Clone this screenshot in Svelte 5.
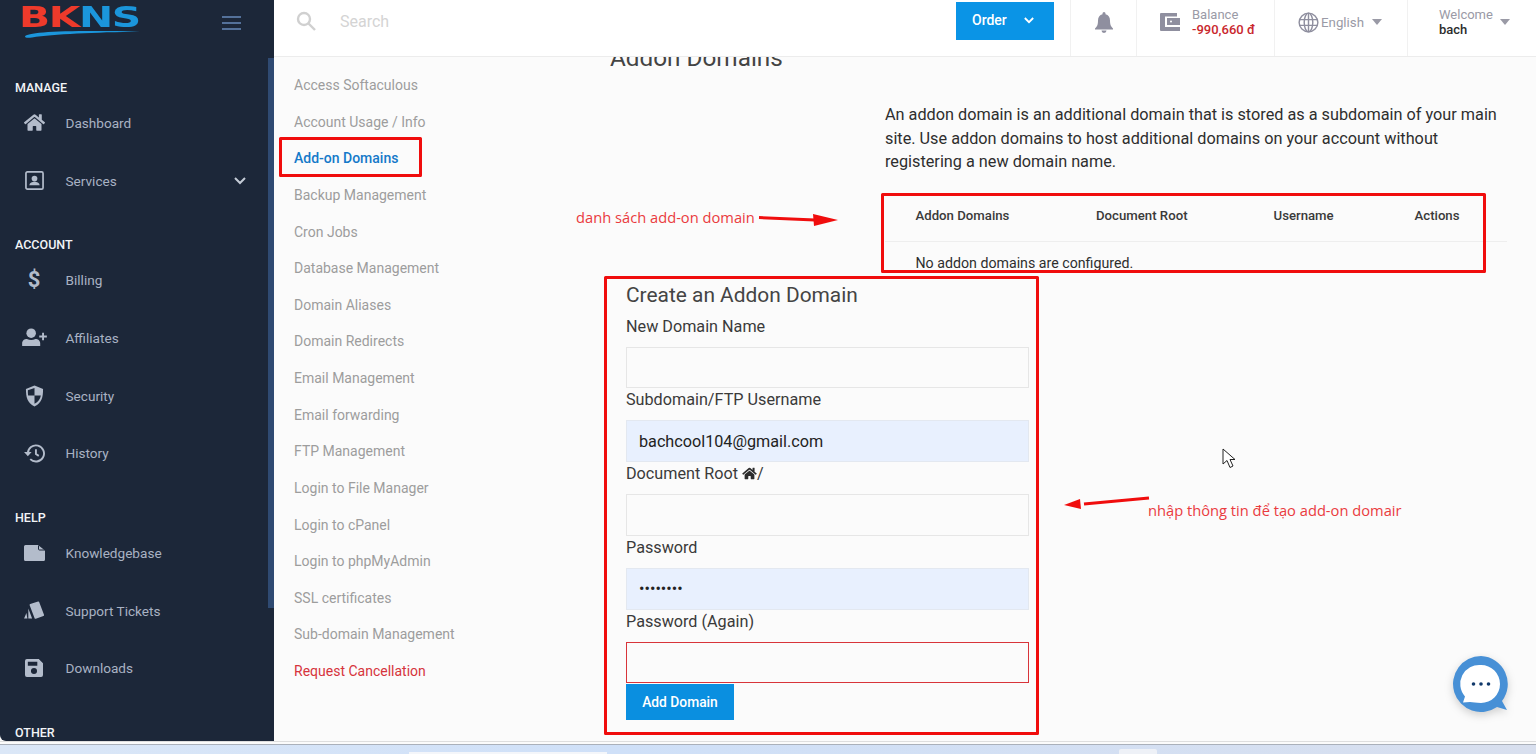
<script>
  const groups = [
    { title: 'MANAGE', items: [
      { label: 'Dashboard', icon: 'home' },
      { label: 'Services', icon: 'contact', more: true }
    ] },
    { title: 'ACCOUNT', items: [
      { label: 'Billing', icon: 'dollar' },
      { label: 'Affiliates', icon: 'userplus' },
      { label: 'Security', icon: 'shield' },
      { label: 'History', icon: 'history' }
    ] },
    { title: 'HELP', items: [
      { label: 'Knowledgebase', icon: 'folder' },
      { label: 'Support Tickets', icon: 'cards' },
      { label: 'Downloads', icon: 'save' }
    ] },
    { title: 'OTHER', items: [] }
  ];

  const sublinks = [
    'Access Softaculous', 'Account Usage / Info', 'Add-on Domains', 'Backup Management',
    'Cron Jobs', 'Database Management', 'Domain Aliases', 'Domain Redirects',
    'Email Management', 'Email forwarding', 'FTP Management', 'Login to File Manager',
    'Login to cPanel', 'Login to phpMyAdmin', 'SSL certificates', 'Sub-domain Management',
    'Request Cancellation'
  ];

  const homePath = 'M280.37 148.26L96 300.11V464a16 16 0 0 0 16 16l112.06-.29a16 16 0 0 0 15.92-16V368a16 16 0 0 1 16-16h64a16 16 0 0 1 16 16v95.64a16 16 0 0 0 16 16.05L464 480a16 16 0 0 0 16-16V300L295.67 148.26a12.19 12.19 0 0 0-15.3 0zM571.6 251.47L488 182.56V44.05a12 12 0 0 0-12-12h-56a12 12 0 0 0-12 12v72.61L318.47 43a48 48 0 0 0-61 0L4.34 251.47a12 12 0 0 0-1.6 16.9l25.5 31A12 12 0 0 0 45.15 301l235.22-193.74a12.19 12.19 0 0 1 15.3 0L530.9 301a12 12 0 0 0 16.9-1.6l25.5-31a12 12 0 0 0-1.7-16.93z';
</script>

<div class="screen">
  <div class="app">
    <aside class="sidebar">
      <div class="brand">
        <div class="logo">
          <span class="logo-text"><span class="red">BK</span><span class="blue">NS</span></span>
          <svg class="swoosh" viewBox="0 0 116 8" width="116" height="8">
            <path d="M1 6.500C3 2 40 0 116 1.500 70 2.500 30 4 8 7.500 4 8 1 8 1 6.500z" fill="#1b96dc" />
          </svg>
        </div>
        <div class="burger"><i></i><i></i><i></i></div>
      </div>

      {#each groups as group}
        <div class="group-title">{group.title}</div>
        {#each group.items as item}
          <div class="nav-item">
            <span class="nav-icon">
              {#if item.icon === 'home'}
                <svg viewBox="0 0 576 512" width="21" height="19"><path d={homePath} /></svg>
              {:else if item.icon === 'contact'}
                <svg viewBox="0 0 20 20" width="19" height="19">
                  <rect x="1" y="1" width="18" height="18" rx="1.500" fill="none" stroke="currentColor" stroke-width="1.800" />
                  <circle cx="10" cy="8" r="3" />
                  <path d="M4.500 15c.5-3 3-3.800 5.500-3.800s5 .8 5.500 3.800z" />
                </svg>
              {:else if item.icon === 'dollar'}
                <span class="dollar">$</span>
              {:else if item.icon === 'userplus'}
                <svg viewBox="0 0 26 20" width="25" height="19">
                  <circle cx="9.500" cy="5.500" r="5" />
                  <path d="M0 19v-3c0-3 2.500-4.500 5-4.500 1.500.7 3 1 4.500 1s3-.3 4.500-1c2.500 0 5 1.500 5 4.500v3z" />
                  <path d="M21 5h2v3h3v2h-3v3h-2v-3h-3V8h3z" />
                </svg>
              {:else if item.icon === 'shield'}
                <svg viewBox="0 0 20 23" width="19" height="22">
                  <path d="M10 .5 1 4c0 8 1 14.500 9 18.500 8-4 9-10.500 9-18.500z" />
                  <path d="M10 3 3 5.500c0 2 0 4 .3 5.500H10zM10 11h6.700C16 15 14 17.500 10 19.700z" fill="#1c2739" />
                </svg>
              {:else if item.icon === 'history'}
                <svg viewBox="0 0 22 20" width="21" height="19" fill="none" stroke="currentColor" stroke-width="2">
                  <path d="M4 10a8.500 8.500 0 1 1 2.500 6" />
                  <path d="M0 8.500h8L4 13z" fill="currentColor" stroke="none" />
                  <path d="M12.500 5.500V10.500l3 2" />
                </svg>
              {:else if item.icon === 'folder'}
                <svg viewBox="0 0 21 16" width="21" height="16">
                  <path d="M1.500 0H14L21 5.500V14.500a1.500 1.500 0 0 1-1.500 1.500h-18A1.500 1.500 0 0 1 0 14.500v-13A1.500 1.500 0 0 1 1.500 0z" />
                  <path d="M14.500 0.500v3.500a1 1 0 0 0 1 1H21" fill="none" stroke="#1c2739" stroke-width="1" />
                </svg>
              {:else if item.icon === 'cards'}
                <svg viewBox="0 0 22 20" width="21" height="19">
                  <path d="M6.500 3.200 14.800.6a1 1 0 0 1 1.200.6l5 13.200a1 1 0 0 1-.6 1.300l-8 3a1 1 0 0 1-1.300-.6L5.900 4.500a1 1 0 0 1 .6-1.300z" />
                  <path d="M4.500 8 8.500 18.500H4.500zM2.500 12.500 3.500 18.500H0z" />
                </svg>
              {:else}
                <svg viewBox="0 0 19 19" width="18" height="18">
                  <path fill-rule="evenodd" d="M2 0h12.500L19 4.500V17a2 2 0 0 1-2 2H2a2 2 0 0 1-2-2V2a2 2 0 0 1 2-2zM3 3v4h10V3zM9.500 9.500a3.200 3.200 0 1 0 0 6.400 3.200 3.200 0 0 0 0-6.400z" />
                </svg>
              {/if}
            </span>
            <span>{item.label}</span>
            {#if item.more}
              <svg class="more" viewBox="0 0 12 8" width="12" height="8" fill="none" stroke="currentColor" stroke-width="2"><path d="M1 1l5 5 5-5" /></svg>
            {/if}
          </div>
        {/each}
      {/each}
      <div class="side-scroll"></div>
    </aside>

    <main class="main">
      <header class="topbar">
        <div class="search">
          <svg viewBox="0 0 20 20" width="20" height="20" fill="none" stroke="#d0d0d0" stroke-width="2.400"><circle cx="8" cy="8" r="6" /><path d="M12.500 12.500 19 19" /></svg>
          <span>Search</span>
        </div>
        <button class="order">Order
          <svg viewBox="0 0 12 8" width="10" height="7" fill="none" stroke="#fff" stroke-width="2.200"><path d="M1 1l5 5 5-5" /></svg>
        </button>
        <div class="cell bell">
          <svg viewBox="0 0 18 21" width="18" height="21" fill="#8f8f9f"><path d="M9 0a1.500 1.500 0 0 1 1.500 1.500v.8C13.500 3 15 5.500 15 8.500c0 4.500 1 6 3 8v1H0v-1c2-2 3-3.500 3-8 0-3 1.500-5.500 4.500-6.200v-.8A1.500 1.500 0 0 1 9 0zM6.500 18.500h5a2.500 2.500 0 0 1-5 0z" /></svg>
        </div>
        <div class="cell balance">
          <svg viewBox="0 0 20 18" width="20" height="18" fill="#8f8f9f"><path fill-rule="evenodd" d="M1 0h16v3.500H5V14h15v4H1a1 1 0 0 1-1-1V1a1 1 0 0 1 1-1zM7 5h13v7H7zM11 7.500a1 1 0 1 0 0 2 1 1 0 0 0 0-2z" /></svg>
          <div class="stack">
            <span class="muted">Balance</span>
            <span class="debt">-990,660 đ</span>
          </div>
        </div>
        <div class="cell lang">
          <svg viewBox="0 0 22 22" width="21" height="21" fill="none" stroke="#8f8f9f" stroke-width="1.500"><circle cx="11" cy="11" r="9.800" /><ellipse cx="11" cy="11" rx="4.500" ry="9.800" /><path d="M1.500 8h19M1.500 14h19M11 1v20" /></svg>
          <span class="english">English</span>
          <span class="caret"></span>
        </div>
        <div class="cell welcome">
          <div class="stack">
            <span class="muted">Welcome</span>
            <span class="user">bach</span>
          </div>
          <span class="caret"></span>
        </div>
      </header>

      <div class="body">
        <nav class="sublinks">
          {#each sublinks as link}
            <div class="sublink" class:active={link === 'Add-on Domains'} class:danger={link === 'Request Cancellation'}>{link}</div>
          {/each}
        </nav>

        <section class="content">
          <h1>Addon Domains</h1>
          <div class="intro">
            <p>An addon domain is an additional domain that is stored as a subdomain of your main site. Use addon domains to host additional domains on your account without registering a new domain name.</p>
            <div class="table">
              <div class="thead">
                <span>Addon Domains</span>
                <span>Document Root</span>
                <span>Username</span>
                <span>Actions</span>
              </div>
              <div class="tbody">No addon domains are configured.</div>
            </div>
          </div>

          <form class="create">
            <h2>Create an Addon Domain</h2>
            <label for="f-domain">New Domain Name</label>
            <input id="f-domain" />
            <label for="f-user">Subdomain/FTP Username</label>
            <input id="f-user" class="filled" value="bachcool104@gmail.com" />
            <label for="f-root">Document Root
              <svg viewBox="0 0 576 512" width="15" height="13"><path fill="#2c2c2c" d={homePath} /></svg>/</label>
            <input id="f-root" />
            <label for="f-pass">Password</label>
            <input id="f-pass" class="filled" type="password" value="12345678" />
            <label for="f-again">Password (Again)</label>
            <input id="f-again" class="invalid" />
            <button type="button" class="add">Add Domain</button>
          </form>
        </section>
      </div>
    </main>
  </div>
  <div class="taskbar">
    <div class="tray">
      <span class="tab-wide"></span>
      <span class="tab-small"></span>
    </div>
  </div>

  <!-- red marks drawn over the recording -->
  <svg class="marks" viewBox="0 0 1536 754" width="1536" height="754" fill="none" stroke="#f00d0d" stroke-width="3" stroke-linejoin="round">
    <rect x="280.500" y="138.500" width="140" height="37" />
    <rect x="882.500" y="194.500" width="602" height="77" />
    <rect x="605.500" y="277.500" width="432" height="456" />
    <path d="M759 217.500 815 220" />
    <path d="M838 220 813 214 814 226z" fill="#f00d0d" stroke="none" />
    <path d="M1149 498 1084 504" />
    <path d="M1064 505 1080 499 1081 509z" fill="#f00d0d" stroke="none" />
  </svg>
  <span class="note note-list">danh sách add-on domain</span>
  <span class="note note-form">nhập thông tin để tạo add-on domair</span>

  <svg class="cursor" viewBox="0 0 14 21" width="14" height="21"><path d="M1 1v15l4-3.500 3 7 3-1.500-3-6.500h5z" fill="#fff" stroke="#222" stroke-width="1" /></svg>

  <div class="chat">
    <svg viewBox="0 0 60 60" width="60" height="60">
      <path d="M30 2a28 28 0 1 0 16 51l10 3-5-9A28 28 0 0 0 30 2z" fill="#4790d6" />
      <path d="M30 11a19 19 0 0 1 0 38c-5 0-8-1-11-1l-7 .5 2-6A19 19 0 0 1 30 11z" fill="#fff" />
      <circle cx="22.500" cy="30" r="1.800" fill="#123a6b" />
      <circle cx="30" cy="30" r="1.800" fill="#123a6b" />
      <circle cx="37.500" cy="30" r="1.800" fill="#123a6b" />
    </svg>
  </div>
</div>

<style>
  :global(body) {
    margin: 0;
    background: #fbfbfb;
  }

  .screen {
    position: relative;
    width: 1536px;
    height: 754px;
    overflow: hidden;
    font-family: Roboto, "Liberation Sans", sans-serif;
  }

  .app {
    display: grid;
    grid-template-columns: 274px 1fr;
    height: 741px;
  }

  .taskbar {
    height: 13px;
    box-sizing: border-box;
    border-top: 1px solid #dedede;
    padding-top: 2px;
    background: #fbfbfb;
  }

  .tray {
    display: flex;
    align-items: flex-end;
    height: 10px;
    box-sizing: border-box;
    border-top: 1px solid #aab0ba;
    padding-left: 409px;
    background: linear-gradient(90deg, #dbe7f7, #cfe0f8 40%, #d8dfee);
  }

  .tab-wide {
    width: 198px;
    height: 2px;
    background: #f4f6fa;
  }

  .tab-small {
    width: 38px;
    height: 5px;
    margin-left: 512px;
    border-radius: 2px 2px 0 0;
    background: #eef1f7;
  }

  /* sidebar */
  .sidebar {
    position: relative;
    background: #1c2739;
    border-bottom-left-radius: 6px;
    color: #a9b2c3;
    overflow: hidden;
  }

  .brand {
    display: flex;
    justify-content: space-between;
    align-items: flex-start;
    height: 80px;
    padding-left: 21px;
    padding-right: 33px;
  }

  .logo {
    position: relative;
    width: 118px;
    padding-top: 2px;
  }

  .logo-text {
    display: block;
    width: 90px;
    margin-left: -2px;
    font: bold 28px/32px "DejaVu Sans", sans-serif;
    letter-spacing: -1px;
    transform: scaleX(1.46);
    transform-origin: left top;
  }

  .red { color: #ee3a2b; }
  .blue { color: #1b96dc; }

  .swoosh {
    position: absolute;
    left: 3px;
    top: 30px;
  }

  .burger {
    display: flex;
    flex-direction: column;
    gap: 4px;
    padding-top: 16px;
  }

  .burger i {
    display: block;
    width: 19px;
    height: 2px;
    background: #54719a;
  }

  .group-title {
    height: 16px;
    margin-top: 28px;
    padding-left: 15px;
    font-size: 12.500px;
    line-height: 16px;
    font-weight: 500;
    color: #f2f4f7;
  }

  .brand + .group-title {
    margin-top: 0;
  }

  .nav-item {
    display: flex;
    align-items: center;
    height: 57.700px;
    font-size: 13.600px;
  }

  .group-title + .nav-item {
    margin-top: -2px;
  }

  .nav-icon {
    display: flex;
    justify-content: center;
    align-items: center;
    width: 30px;
    margin-left: 19px;
    margin-right: 16.500px;
    color: #b3bccb;
    fill: currentColor;
  }

  .dollar {
    font-size: 22px;
    font-weight: 700;
    line-height: 22px;
  }

  .more {
    margin-left: auto;
    margin-right: 28px;
    color: #c4cbd6;
  }

  .side-scroll {
    position: absolute;
    right: 0;
    top: 58px;
    width: 6px;
    height: 550px;
    background: #2f4a72;
  }

  /* top bar */
  .main {
    display: flex;
    flex-direction: column;
    min-width: 0;
  }

  .topbar {
    display: flex;
    align-items: stretch;
    height: 57px;
    box-sizing: border-box;
    background: #fff;
    border-bottom: 1px solid #ececec;
    color: #888;
  }

  .search {
    display: flex;
    flex: 1;
    align-items: center;
    gap: 24px;
    height: 42px;
    padding-left: 22px;
    font-size: 16px;
    color: #d4d4d4;
  }

  .order {
    display: flex;
    align-items: center;
    gap: 17px;
    width: 98px;
    height: 38px;
    margin-top: 2px;
    border: 0;
    background: #0a94e6;
    color: #fff;
    font: 500 14px Roboto, sans-serif;
    padding: 0 0 2px 16px;
  }

  .cell {
    display: flex;
    align-items: center;
    flex: none;
    box-sizing: border-box;
    border-left: 1px solid #f1f1f1;
    height: 56px;
    padding-bottom: 12px;
  }

  .bell {
    justify-content: center;
    width: 66px;
    margin-left: 16px;
  }

  .balance {
    width: 138px;
    padding-left: 23px;
    gap: 12px;
  }

  .stack {
    display: flex;
    flex-direction: column;
    font-size: 13px;
    line-height: 15px;
  }

  .muted { color: #9a9aa6; }

  .debt {
    color: #c9272d;
    font-weight: 500;
  }

  .lang {
    width: 133px;
    padding-left: 23px;
    gap: 2px;
    color: #9a9aa6;
    font-size: 13.300px;
  }

  .english { margin-right: 6px; }

  .caret {
    width: 0;
    height: 0;
    border-left: 5px solid transparent;
    border-right: 5px solid transparent;
    border-top: 6px solid #9a9aa6;
  }

  .welcome {
    width: 129px;
    padding-left: 31px;
    gap: 7px;
  }

  .user {
    color: #2d2d2d;
    font-weight: 500;
  }

  /* page body */
  .body {
    display: flex;
    flex: 1;
    min-height: 0;
    overflow: hidden;
    background: #fbfbfb;
  }

  .sublinks {
    width: 316px;
    flex: none;
    padding: 10px 0 0 20px;
    font-size: 14px;
    color: #9d9d9d;
  }

  .sublink {
    height: 36.640px;
    line-height: 36.640px;
  }

  .sublink.active {
    color: #1479c9;
    font-weight: 500;
  }

  .sublink.danger { color: #d6343c; }

  .content {
    flex: 1;
    min-width: 0;
    margin-top: -14px;
    color: #2e2e2e;
  }

  h1 {
    margin: 0;
    height: 30px;
    font-size: 24.300px;
    line-height: 30px;
    font-weight: 400;
    color: #444;
  }

  .intro {
    width: 622px;
    margin-left: 275px;
    margin-top: 30px;
  }

  p {
    margin: 0;
    font-size: 16.250px;
    line-height: 23.600px;
  }

  .table {
    margin-top: 16px;
    font-size: 13.200px;
  }

  .thead {
    display: grid;
    grid-template-columns: 180.500px 177.500px 141px 1fr;
    align-items: center;
    height: 52px;
    padding-left: 30.500px;
    border-bottom: 1px solid #eee;
    box-sizing: border-box;
    font-weight: 500;
    color: #3a3a3a;
  }

  .tbody {
    height: 31px;
    line-height: 42px;
    padding-left: 30.500px;
    font-size: 14.200px;
    overflow: hidden;
  }

  .create {
    display: flex;
    flex-direction: column;
    align-items: flex-start;
    width: 403px;
    margin-left: 16px;
    margin-top: 9px;
  }

  h2 {
    margin: 0 0 7px;
    font-size: 20.900px;
    line-height: 26px;
    font-weight: 400;
    color: #444;
  }

  label {
    display: block;
    height: 24px;
    margin-bottom: 8px;
    font-size: 16.200px;
    line-height: 24px;
    color: #3a3a3a;
  }

  label svg {
    vertical-align: -1px;
  }

  input {
    display: block;
    width: 100%;
    height: 41.700px;
    box-sizing: border-box;
    padding: 0 12px;
    border: 1px solid #e6e6e6;
    background: #fbfbfb;
    font: 16.200px Roboto, sans-serif;
    color: #222;
  }

  input.filled {
    background: #e8f0fe;
    border-color: #e3e8f0;
  }

  input.invalid { border-color: #d8343a; }

  .add {
    width: 108px;
    height: 36px;
    margin-top: 1px;
    border: 0;
    background: #0a8fe0;
    color: #fff;
    font: 500 13.800px Roboto, sans-serif;
  }

  /* overlays */
  .marks {
    position: absolute;
    left: 0;
    top: 0;
    pointer-events: none;
  }

  .note {
    position: absolute;
    font-family: "Open Sans", sans-serif;
    font-size: 14.700px;
    line-height: 18px;
    color: #ea3b3f;
    white-space: nowrap;
  }

  .note-list {
    left: 576px;
    top: 208px;
  }

  .note-form {
    left: 1148px;
    top: 501px;
  }

  .cursor {
    position: absolute;
    left: 1222px;
    top: 448px;
  }

  .chat {
    position: absolute;
    left: 1451px;
    top: 654px;
    filter: drop-shadow(0 3px 4px rgba(0, 0, 0, 0.18));
  }
</style>
